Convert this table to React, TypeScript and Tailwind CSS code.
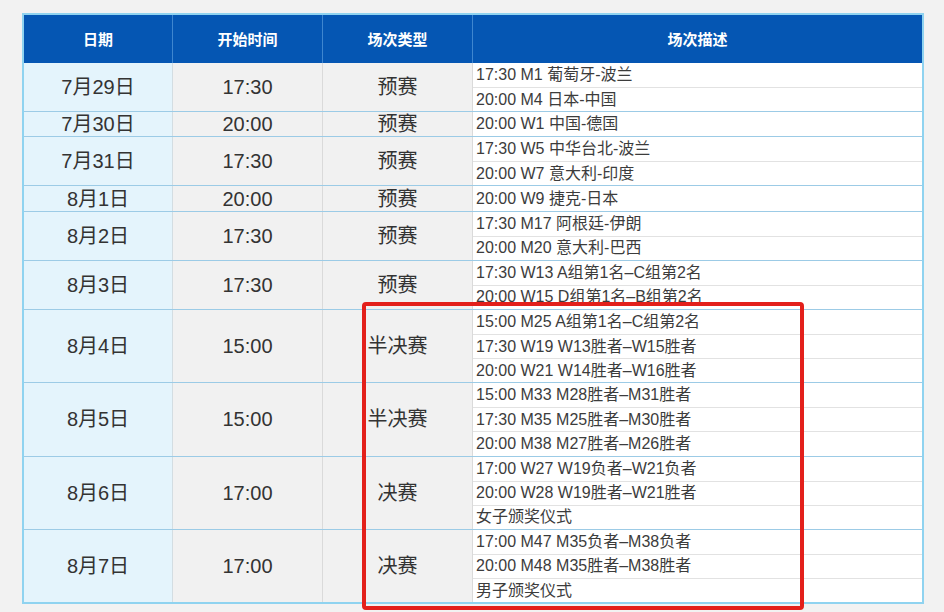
import React from "react";

type Match = {
  date: string;
  time: string;
  kind: string;
  lines: string[];
};

const matches: Match[] = [
  { date: "7月29日", time: "17:30", kind: "预赛", lines: ["17:30 M1 葡萄牙-波兰", "20:00 M4 日本-中国"] },
  { date: "7月30日", time: "20:00", kind: "预赛", lines: ["20:00 W1 中国-德国"] },
  { date: "7月31日", time: "17:30", kind: "预赛", lines: ["17:30 W5 中华台北-波兰", "20:00 W7 意大利-印度"] },
  { date: "8月1日", time: "20:00", kind: "预赛", lines: ["20:00 W9 捷克-日本"] },
  { date: "8月2日", time: "17:30", kind: "预赛", lines: ["17:30 M17 阿根廷-伊朗", "20:00 M20 意大利-巴西"] },
  { date: "8月3日", time: "17:30", kind: "预赛", lines: ["17:30 W13 A组第1名–C组第2名", "20:00 W15 D组第1名–B组第2名"] },
  {
    date: "8月4日",
    time: "15:00",
    kind: "半决赛",
    lines: ["15:00 M25 A组第1名–C组第2名", "17:30 W19 W13胜者–W15胜者", "20:00 W21 W14胜者–W16胜者"],
  },
  {
    date: "8月5日",
    time: "15:00",
    kind: "半决赛",
    lines: ["15:00 M33 M28胜者–M31胜者", "17:30 M35 M25胜者–M30胜者", "20:00 M38 M27胜者–M26胜者"],
  },
  {
    date: "8月6日",
    time: "17:00",
    kind: "决赛",
    lines: ["17:00 W27 W19负者–W21负者", "20:00 W28 W19胜者–W21胜者", "女子颁奖仪式"],
  },
  {
    date: "8月7日",
    time: "17:00",
    kind: "决赛",
    lines: ["17:00 M47 M35负者–M38负者", "20:00 M48 M35胜者–M38胜者", "男子颁奖仪式"],
  },
];

const font = { fontFamily: '"Liberation Sans", "Noto Sans CJK SC", sans-serif' };

export default function App() {
  return (
    <div className="relative w-[944px] h-[612px] bg-[#f2f2f2] pt-[13px] pl-[22px] overflow-hidden" style={font}>
      <div className="w-[902px] border-2 border-[#8fd3f0] bg-white">
        {/* header */}
        <div className="flex h-[48px] bg-[#0556b3] text-white text-[15px] font-bold leading-none">
          <div className="w-[149px] border-r border-[#3f86cf] flex items-center justify-center">日期</div>
          <div className="w-[150px] border-r border-[#3f86cf] flex items-center justify-center">开始时间</div>
          <div className="w-[150px] border-r border-[#3f86cf] flex items-center justify-center">场次类型</div>
          <div className="flex-1 flex items-center justify-center">场次描述</div>
        </div>

        {matches.map((m, i) => (
          <div key={m.date} className={`flex text-[20px] leading-none text-[#333] ${i > 0 ? "border-t border-[#9ccbe6]" : ""}`}>
            <div className="w-[149px] border-r border-[#d3dde2] bg-[#e4f4fc] flex items-center justify-center">
              {m.date}
            </div>
            <div className="w-[150px] border-r border-[#dadada] bg-[#f1f1f1] flex items-center justify-center">
              {m.time}
            </div>
            <div className="w-[150px] border-r border-[#dadada] bg-[#f1f1f1] flex items-center justify-center">
              {m.kind}
            </div>
            <div className="flex-1 flex flex-col">
              {m.lines.map((line, j) => (
                <div
                  key={line}
                  className={`h-[24.1px] box-border flex items-center pl-[3px] text-[16px] leading-none text-[#3c3c3c] whitespace-nowrap ${
                    j > 0 ? "border-t border-[#e2e2e2]" : ""
                  }`}
                >
                  {line}
                </div>
              ))}
            </div>
          </div>
        ))}
      </div>

      {/* highlight */}
      <div className="absolute left-[362px] top-[302px] w-[442px] h-[308px] border-4 border-[#e3201b] rounded-[4px] pointer-events-none" />
    </div>
  );
}
